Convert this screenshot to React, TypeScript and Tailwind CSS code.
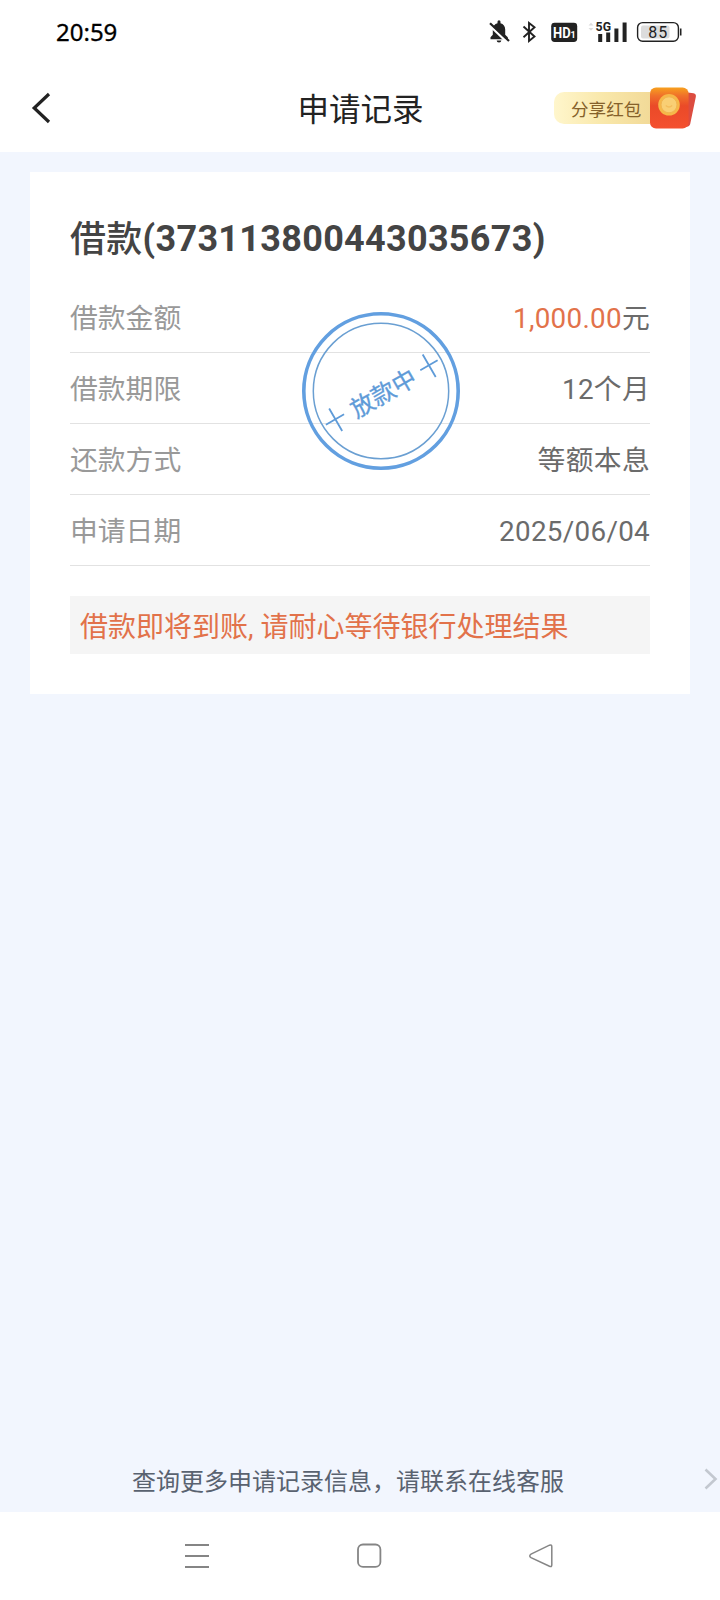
const rows = [
  { label: "借款金额", value: "1,000.00", unit: "元", highlight: true },
  { label: "借款期限", value: "12个月" },
  { label: "还款方式", value: "等额本息" },
  { label: "申请日期", value: "2025/06/04" },
];

function StatusBar() {
  return (
    <div className="h-16 pl-[56px] pr-[37px] flex items-center justify-between">
      <span className="text-[24px] leading-none text-black font-['Noto_Sans',sans-serif] [-webkit-text-stroke:0.3px_black]">20:59</span>
      <svg width="196" height="40" viewBox="0 -8 196 40" className="shrink-0 overflow-visible" fill="none">
        {/* muted bell */}
        <path d="M3.5 19.2v-2l2.3-2.4V9.5c0-3.4 1.8-5.6 4.7-6.3V1.8a1.5 1.5 0 0 1 3 0v1.4c2.9.7 4.7 2.9 4.7 6.3v5.3l2.6 2.4v2z" fill="#222" />
        <path d="M9.7 20.6h4.6a2.3 2 0 0 1-4.6 0z" fill="#222" />
        <path d="M1.8 4.6 19.5 21.6" stroke="#fff" strokeWidth="2.4" />
        <path d="M3 3.2 22 21" stroke="#222" strokeWidth="2.2" />
        {/* bluetooth */}
        <path d="M36.5 6.5 47.5 16.5 42 21V3l5.5 4.3L36.5 17.2" stroke="#222" strokeWidth="1.9" />
        {/* HD */}
        <rect x="64.2" y="2.8" width="26" height="19.2" rx="3.4" fill="#222" />
        <text x="66" y="17.8" fill="#fff" fontSize="15" fontWeight="700" textLength="17.6" lengthAdjust="spacingAndGlyphs" fontFamily="Roboto, sans-serif">HD</text>
        <text x="83.4" y="17.8" fill="#fff" fontSize="9" fontWeight="700" fontFamily="Roboto, sans-serif">1</text>
        {/* network */}
        <path d="M101.5 5.5 104 2.8l2.5 2.7zM101.5 8l2.5 2.7 2.5-2.7z" fill="#ddd" />
        <path d="M113.2 14v8M121.2 12.5v9.5M129.4 8.5V22M137.6 2.5V22" stroke="#222" strokeWidth="4" />
        <text x="108.6" y="11.2" fill="#222" stroke="#fff" strokeWidth="2" paintOrder="stroke" fontSize="13.5" fontWeight="700" textLength="15.4" lengthAdjust="spacingAndGlyphs" fontFamily="Roboto, sans-serif">5G</text>
        {/* battery */}
        <rect x="150.6" y="2.6" width="40.8" height="18.6" rx="5" stroke="#222" strokeWidth="1.4" />
        <rect x="154" y="5.5" width="28.5" height="13" rx="2" fill="#dcdcdc" />
        <path d="M193.7 8.5v7" stroke="#222" strokeWidth="1.6" />
        <text x="161.3" y="17.6" fill="#222" fontSize="16" textLength="19" fontFamily="Roboto, sans-serif">85</text>
      </svg>
    </div>
  );
}

function ShareBadge() {
  return (
    <div className="flex items-center h-[44px]">
      <div className="w-[96px] ml-px h-8 pl-[17px] pt-1.5 flex items-center rounded-l-[10px] bg-linear-to-r from-[#fff6cc] via-[#f9e8ab] to-[#f2da98] text-[17.6px] leading-none whitespace-nowrap text-[#85612a]">
        分享红包
      </div>
      <svg width="48" height="44" viewBox="0 0 48 44" className="shrink-0">
        <defs>
          <linearGradient id="packet" x1="0" y1="0" x2="0" y2="1">
            <stop offset="0" stopColor="#f7a01e" />
            <stop offset="0.2" stopColor="#f0702a" />
            <stop offset="0.45" stopColor="#ea4a28" />
            <stop offset="1" stopColor="#f4502f" />
          </linearGradient>
        </defs>
        <path d="M34 6 43.5 7.2Q46.5 8 45.8 11L40.2 38Q39.5 41 35 41z" fill="#dc4c40" />
        <rect x="0" y="1.5" width="38.6" height="41" rx="6" fill="url(#packet)" />
        <circle cx="19" cy="18.8" r="10.8" fill="#f6b848" />
        <circle cx="19" cy="18.8" r="8" fill="#f9cf74" stroke="#f1b450" strokeWidth="1" />
        <path d="M15.8 19.5Q19 22.5 22.2 19.5" fill="none" stroke="#f3bd5c" strokeWidth="1.4" />
      </svg>
    </div>
  );
}

function Stamp() {
  return (
    <svg width="160" height="160" viewBox="-80 -80 160 160" className="absolute left-[271px] top-[139px]" fill="none">
      <circle r="77.2" stroke="#629fe0" strokeWidth="3.6" />
      <circle r="67.7" stroke="#6a9fd2" strokeWidth="1.5" />
      <g transform="translate(1 2) rotate(-30)">
        <text x="1" y="9.5" textAnchor="middle" fill="#5f9bd8" stroke="#5f9bd8" strokeWidth="0.3" fontSize="24" fontFamily="'Noto Sans CJK SC', sans-serif">放款中</text>
        <path d="M-64.5 -.5h21M-53.5 -13v26M44.5 -.5h20M54.5 -13v26" stroke="#5f9bd8" strokeWidth="1.8" />
      </g>
    </svg>
  );
}

export default function App() {
  return (
    <div className="w-[720px] h-[1600px] flex flex-col overflow-hidden bg-[#f2f6fe] font-[Roboto,'Noto_Sans_CJK_SC',sans-serif]">
      <header className="h-[152px] shrink-0 bg-white">
        <StatusBar />
        <div className="h-[88px] pl-[31px] pr-[22px] grid grid-cols-[137px_1fr_145px] items-center">
          <svg width="22" height="32" viewBox="0 0 22 32" fill="none">
            <path d="M18 2 3.2 16 18 30" stroke="#222" strokeWidth="3.2" />
          </svg>
          <h1 className="pt-1.5 text-center text-[31.5px] leading-none text-[#222]">申请记录</h1>
          <ShareBadge />
        </div>
      </header>

      <main className="flex-1 px-[30px] pt-5">
        <section className="relative h-[522px] px-10 pt-[38px] bg-white">
          <h2 className="h-[58px] flex items-center text-[36px] leading-none font-bold tracking-[0.3px] whitespace-nowrap text-[#444]">
            <span className="pt-0.5 font-medium">借款</span>
            <span>(373113800443035673)</span>
          </h2>
          <div className="pt-[14px]">
            {rows.map((row) => (
              <div key={row.label} className="h-[71px] pt-1 flex items-center justify-between border-b border-[#e2e2e2] text-[27.8px] leading-none">
                <span className="text-[#999]">{row.label}</span>
                <span className="text-[#6b6b6b] tracking-[0.3px]">
                  <span className={row.highlight ? "text-[#e2724a]" : ""}>{row.value}</span>
                  {row.unit}
                </span>
              </div>
            ))}
          </div>
          <p className="mt-[30px] h-[58px] pt-1.5 px-[10px] flex items-center bg-[#f5f5f5] text-[28px] leading-none text-[#e2724a]">
            借款即将到账, 请耐心等待银行处理结果
          </p>
          <Stamp />
        </section>
      </main>

      <div className="h-[64px] pl-[132px] pr-[2px] flex items-center justify-between">
        <span className="pt-[3px] text-[24px] leading-none text-[#596270]">查询更多申请记录信息，请联系在线客服</span>
        <svg width="14" height="24" viewBox="0 0 14 24" fill="none" className="mb-0.5">
          <path d="M1.5 2.5 11.5 12 1.5 21.5" stroke="#c3c8d0" strokeWidth="2.6" />
        </svg>
      </div>

      <nav className="h-[88px] shrink-0 bg-white flex items-center">
        <svg width="720" height="32" viewBox="0 0 720 32" fill="none" stroke="#858585" strokeWidth="1.8">
          <path d="M185 5h24M185 16h24M185 27h24" />
          <rect x="358" y="4.5" width="22.4" height="22.4" rx="5" />
          <path d="M531 14.2 549.5 5.2Q551.8 4.4 551.8 6.8V25Q551.8 27.3 549.5 26.3L531 17.6Q528.5 16 531 14.2z" strokeWidth="1.5" />
        </svg>
      </nav>
    </div>
  );
}
